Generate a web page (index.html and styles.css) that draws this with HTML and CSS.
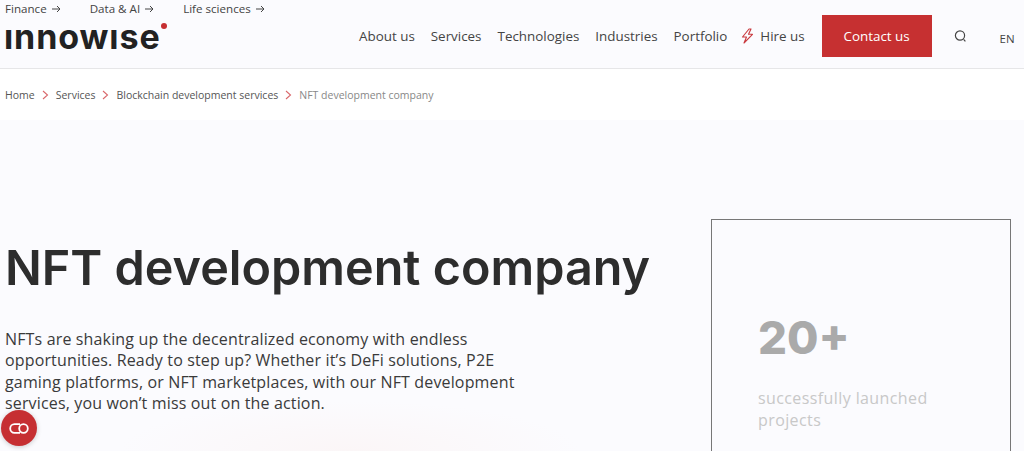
FILE: index.html
```html
<!DOCTYPE html>
<html lang="en">
<head>
    <meta charset="UTF-8">
    <meta name="viewport" content="width=device-width, initial-scale=1.0">
    <title>NFT development company</title>
    <link rel="stylesheet" href="styles.css">
</head>
<body>
    <header class="site-header">
        <div class="brand">
            <div class="top-links">
                <a href="#">Finance <svg class="arrow" width="9" height="8" viewBox="0 0 9 8" fill="none" stroke="#444" stroke-width="1"><path d="M0 4h8M5 1l3 3-3 3"/></svg></a>
                <a href="#">Data &amp; AI <svg class="arrow" width="9" height="8" viewBox="0 0 9 8" fill="none" stroke="#444" stroke-width="1"><path d="M0 4h8M5 1l3 3-3 3"/></svg></a>
                <a href="#">Life sciences <svg class="arrow" width="9" height="8" viewBox="0 0 9 8" fill="none" stroke="#444" stroke-width="1"><path d="M0 4h8M5 1l3 3-3 3"/></svg></a>
            </div>
            <div class="logo">ınnowıse<span class="logo-dot"></span></div>
        </div>
        <div class="header-right">
            <nav class="main-nav">
                <a href="#">About us</a>
                <a href="#">Services</a>
                <a href="#">Technologies</a>
                <a href="#">Industries</a>
                <a href="#">Portfolio</a>
                <a href="#" class="hire">
                    <svg width="13" height="16" viewBox="0 0 13 16" fill="none" stroke="#c93a3f" stroke-width="1.1" stroke-linejoin="round"><path d="M8 1 1.5 9h4L3 15l8.5-8.7H7.5L10 1z"/></svg>
                    Hire us
                </a>
            </nav>
            <a href="#" class="contact-btn">Contact us</a>
            <svg class="search-icon" width="13" height="13" viewBox="0 0 13 13" fill="none" stroke="#444" stroke-width="1.2"><circle cx="6" cy="5.5" r="4.6"/><path d="M9.6 9.4l1.8 2"/></svg>
            <span class="lang">EN</span>
        </div>
    </header>

    <div class="breadcrumbs">
        <a href="#">Home</a>
        <svg class="chev" width="7" height="10" viewBox="0 0 7 10" fill="none" stroke="#d9686b" stroke-width="1.1"><path d="M1 1l4.5 4L1 9"/></svg>
        <a href="#">Services</a>
        <svg class="chev" width="7" height="10" viewBox="0 0 7 10" fill="none" stroke="#d9686b" stroke-width="1.1"><path d="M1 1l4.5 4L1 9"/></svg>
        <a href="#">Blockchain development services</a>
        <svg class="chev" width="7" height="10" viewBox="0 0 7 10" fill="none" stroke="#d9686b" stroke-width="1.1"><path d="M1 1l4.5 4L1 9"/></svg>
        <span class="current">NFT development company</span>
    </div>

    <section class="hero">
        <div class="hero-text">
            <h1>NFT development company</h1>
            <p>NFTs are shaking up the decentralized economy with endless opportunities. Ready to step up? Whether it’s DeFi solutions, P2E gaming platforms, or NFT marketplaces, with our NFT development services, you won’t miss out on the action.</p>
        </div>
        <div class="stat-card">
            <div class="stat-num">20+</div>
            <div class="stat-label">successfully launched projects</div>
        </div>
    </section>

    <a href="#" class="chat-btn">
        <svg width="20" height="11" viewBox="0 0 20 11" fill="none" stroke="#fff" stroke-width="1.8"><path d="M11 1.2H5.5a4.3 4.3 0 0 0 0 8.6H11"/><circle cx="14.5" cy="5.5" r="4.3"/></svg>
    </a>
</body>
</html>
```

FILE: styles.css
```css
* {
    box-sizing: border-box;
}
html, body {
    height: 451px;
    overflow: hidden;
}
body {
    margin: 0;
    font-family: "Open Sans", "Liberation Sans", sans-serif;
    color: #333;
    background-color: #fbfbfe;
}
a {
    color: inherit;
    text-decoration: none;
}
.site-header {
    display: flex;
    height: 69px;
    padding-left: 4px;
    border-bottom: 1px solid #e6e6e8;
    background-color: #fbfbfe;
}
.brand {
    width: 355px;
}
.top-links {
    display: flex;
    gap: 29px;
    padding-left: 1px;
    font-size: 11.6px;
    line-height: 17px;
    color: #444;
}
.arrow {
    margin-left: 2px;
}
.logo {
    position: relative;
    width: 163px;
    margin-top: 1px;
    font-family: "Inter", sans-serif;
    font-size: 34px;
    font-weight: 700;
    line-height: 38px;
    letter-spacing: 0.9px;
    color: #222;
}
.logo-dot {
    position: absolute;
    top: 5px;
    right: 0;
    width: 6px;
    height: 6px;
    border-radius: 50%;
    background-color: #c62f32;
}
.header-right {
    display: flex;
    align-items: center;
    height: 42px;
    margin-top: 15px;
}
.main-nav {
    display: flex;
    align-items: center;
    gap: 16px;
    font-size: 13.4px;
    color: #444;
}
.hire {
    display: flex;
    align-items: center;
    gap: 6px;
    margin-left: -2px;
}
.contact-btn {
    display: flex;
    align-items: center;
    justify-content: center;
    width: 110px;
    height: 42px;
    margin-left: 17px;
    background-color: #c63031;
    color: #fff;
    font-size: 13.4px;
}
.search-icon {
    margin-left: 22px;
}
.lang {
    margin-left: 33px;
    margin-top: 4px;
    font-size: 11.5px;
    color: #444;
}
.breadcrumbs {
    display: flex;
    align-items: center;
    gap: 7px;
    height: 51px;
    padding-left: 5px;
    background-color: #fff;
    font-size: 10.5px;
    color: #555;
}
.breadcrumbs .current {
    color: #888;
}
.hero {
    display: flex;
    justify-content: space-between;
    height: 331px;
    padding: 99px 13px 0 5px;
    background: radial-gradient(ellipse 230px 50px at 350px 331px, #fbf6f7, transparent);
}
.hero-text {
    width: 530px;
}
h1 {
    margin: 21px 0 0;
    font-family: "Inter", sans-serif;
    font-size: 48.5px;
    font-weight: 600;
    line-height: 56px;
    white-space: nowrap;
    color: #2d2d2d;
}
.hero-text p {
    margin: 33px 0 0;
    font-size: 16px;
    line-height: 21.4px;
    letter-spacing: 0.15px;
    color: #3a3a3a;
}
.stat-card {
    width: 300px;
    padding: 90px 46px 0;
    border: 1px solid #777;
    border-bottom: none;
}
.stat-num {
    font-family: "Inter", sans-serif;
    font-size: 45.5px;
    font-weight: 800;
    line-height: 56px;
    color: #aaa;
}
.stat-label {
    width: 180px;
    margin-top: 21px;
    font-size: 16px;
    line-height: 22px;
    letter-spacing: 0.4px;
    color: #c8c8c8;
}
.chat-btn {
    position: fixed;
    left: 1px;
    top: 410px;
    display: flex;
    align-items: center;
    justify-content: center;
    width: 36px;
    height: 36px;
    border-radius: 50%;
    background-color: #c62f32;
    box-shadow: 0 1px 5px rgba(0, 0, 0, 0.2);
}
```
